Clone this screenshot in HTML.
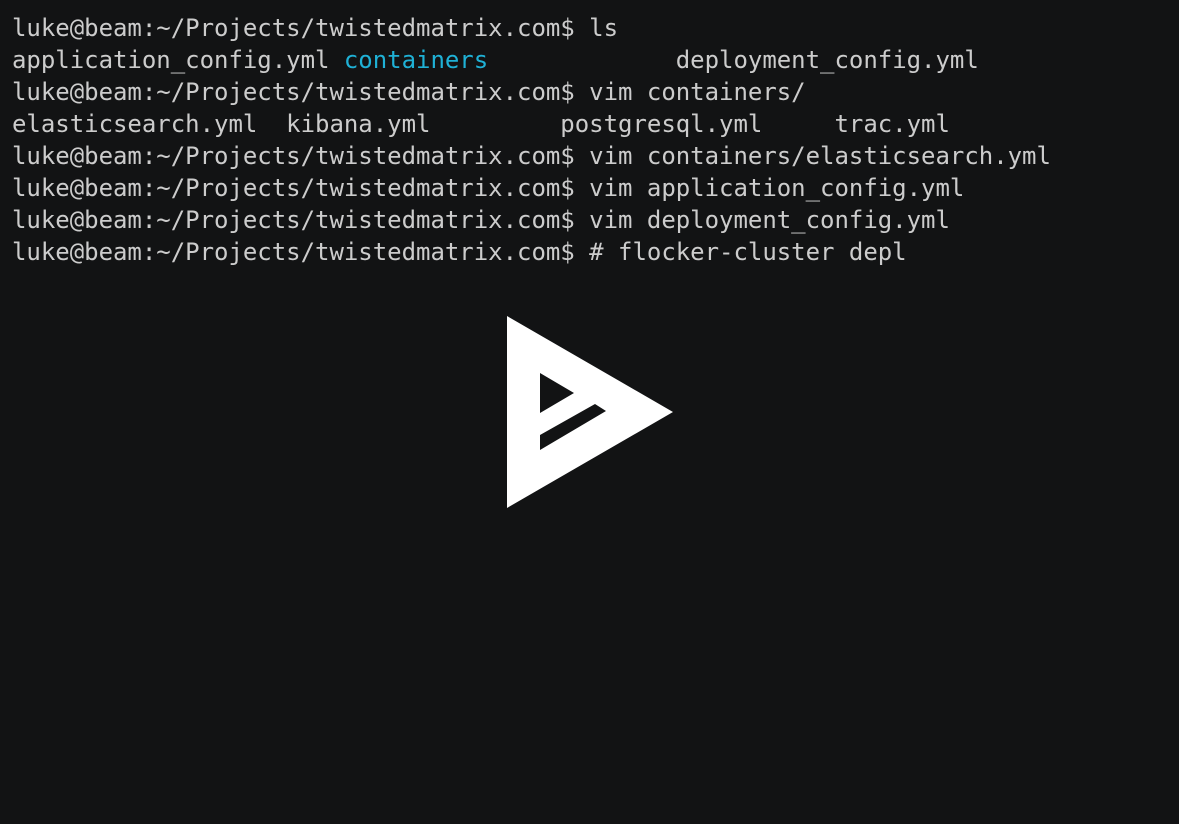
<!DOCTYPE html>
<html><head><style>
html,body{margin:0;background:#121314;width:1179px;height:824px;overflow:hidden}
pre{margin:0;position:absolute;left:12px;top:12px;font-family:"DejaVu Sans Mono","Liberation Mono",monospace;font-size:24px;line-height:32px;color:#cccccc;letter-spacing:-0.02px}
.c{color:#1fb1d6}
svg{position:absolute;left:0;top:0}
</style></head><body>
<pre>luke@beam:~/Projects/twistedmatrix.com$ ls
application_config.yml <span class="c">containers</span>             deployment_config.yml
luke@beam:~/Projects/twistedmatrix.com$ vim containers/
elasticsearch.yml  kibana.yml         postgresql.yml     trac.yml
luke@beam:~/Projects/twistedmatrix.com$ vim containers/elasticsearch.yml
luke@beam:~/Projects/twistedmatrix.com$ vim application_config.yml
luke@beam:~/Projects/twistedmatrix.com$ vim deployment_config.yml
luke@beam:~/Projects/twistedmatrix.com$ # flocker-cluster depl</pre>
<svg width="1179" height="824">
<path fill="#fff" fill-rule="evenodd" d="M507 316 L673 412 L507 508 Z M540 373 L574 393 L540 413 Z M540 435 L595 404 L606 411 L540 450 Z"/>
</svg>
</body></html>
